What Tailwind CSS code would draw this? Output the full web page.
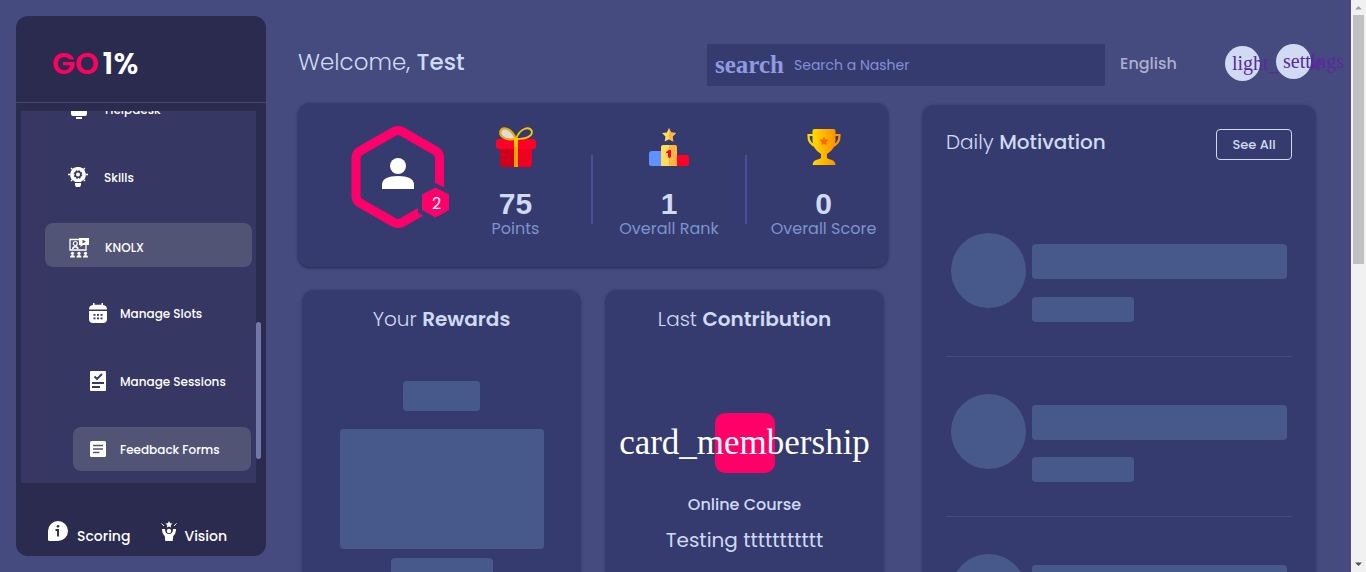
<!DOCTYPE html>
<html lang="en">
<head>
<meta charset="utf-8">
<title>GO 1%</title>
<script src="https://cdn.jsdelivr.net/npm/@tailwindcss/browser@4"></script>
</head>
<body class="flex h-screen overflow-hidden bg-[#454a7f] font-[Poppins,Inter,sans-serif] text-[#cfdaf3]">

<aside class="my-4 ml-4 flex w-[250px] shrink-0 flex-col rounded-xl bg-[#2a2b4e] text-white">
  <div class="flex h-[87px] shrink-0 items-center gap-1 border-b border-[#45466a] pl-9 pt-2 text-[30px] font-semibold">
    <span class="text-[#ff0061]">GO</span><span>1%</span>
  </div>
  <div class="mx-[5px] mt-2 flex min-h-0 flex-1">
    <nav class="flex min-h-0 flex-1 flex-col justify-end gap-6 overflow-hidden bg-[#363762] pb-3 text-xs font-medium [&_span]:pt-0.5">
      <a href="#" class="ml-6 mr-1 flex h-11 shrink-0 items-center gap-4 rounded-lg pl-6">
        <svg class="size-5 shrink-0" viewBox="0 0 20 20" fill="#fff"><path d="M2 1h16v14q0 2-2 2H4q-2 0-2-2zM7 18h6v2H7z"/></svg>
        <span>Helpdesk</span>
      </a>
      <a href="#" class="ml-6 mr-1 flex h-11 shrink-0 items-center gap-4 rounded-lg pl-[23px]">
        <svg class="size-5 shrink-0" viewBox="0 0 20 20" fill="none"><path d="M0 7.500h2M18 7.500h2M3 1l1.500 1.500M17 1l-1.500 1.500M3 14l1.500-1.500M17 14l-1.500-1.500" stroke="#fff" stroke-width="1.300"/><path d="M10 0a7.500 7.500 0 0 1 4 14l-1 1H7l-1-1A7.500 7.500 0 0 1 10 0M7 16h6v2l-1 2H8l-1-2z" fill="#fff"/><circle cx="10" cy="7.500" r="3.600" stroke="#363762" stroke-width="1.500" stroke-dasharray="1.800 1"/><circle cx="10" cy="7.500" r="2.700" stroke="#363762" stroke-width="1.400"/></svg>
        <span>Skills</span>
      </a>
      <a href="#" class="ml-6 mr-1 flex h-11 shrink-0 items-center gap-4 rounded-lg bg-[#525476] pl-6 pt-1">
        <svg class="mt-0.5 size-5 shrink-0" viewBox="0 0 20 20" fill="#fff"><path d="M10 1.500H1V12h16V7" fill="none" stroke="#fff" stroke-width="1.300"/><circle cx="6.300" cy="5.500" r="2" fill="none" stroke="#fff" stroke-width="1.200"/><path d="M3 11q0-3 3.300-3T9.600 11H8q0-1.500-1.700-1.500T4.600 11zM10 0h10v7h-6l-2.500 2V7H10zM1 19.500q0-2.500 2.500-2.500T6 19.500zM7.500 19.500Q7.500 17 10 17t2.500 2.500zM14 19.500q0-2.500 2.500-2.500t2.500 2.500z"/><circle cx="3.500" cy="15.300" r="1.600"/><circle cx="10" cy="15.300" r="1.600"/><circle cx="16.500" cy="15.300" r="1.600"/><path d="M13.500 1.700v3.800l3.500-1.900z" fill="#525476"/></svg>
        <span>KNOLX</span>
      </a>
      <a href="#" class="ml-[52px] mr-[5px] flex h-11 shrink-0 items-center gap-3 rounded-lg pl-[15px]">
        <svg class="size-5 shrink-0" viewBox="0 0 20 20" fill="#fff"><path d="M5 0h1.500v1.800h7V0H15v2q4 .3 4 4.500H1Q1 2.300 5 2zM1 8h18v8q0 4-4 4H5q-4 0-4-4z"/><path d="M5.500 11h2v1.800h-2zM9 11h2v1.800H9zM12.500 11h2v1.800h-2zM5.500 14.500h2v1.800h-2zM9 14.500h2v1.800H9zM12.500 14.500h2v1.800h-2z" fill="#363762"/></svg>
        <span>Manage Slots</span>
      </a>
      <a href="#" class="ml-[52px] mr-[5px] flex h-11 shrink-0 items-center gap-3 rounded-lg pl-[15px]">
        <svg class="size-5 shrink-0" viewBox="0 0 20 20" fill="none"><rect x="2" width="16" height="20" rx="1" fill="#fff"/><path d="M6.500 5.500 9 8l5-5M4 12h12M4 16h8" stroke="#363762" stroke-width="1.900"/></svg>
        <span>Manage Sessions</span>
      </a>
      <a href="#" class="ml-[52px] mr-[5px] flex h-11 shrink-0 items-center gap-3 rounded-lg bg-[#525476] pl-[15px]">
        <svg class="size-5 shrink-0" viewBox="0 0 20 20" fill="none"><rect x="2" y="2" width="16" height="16" rx="1.500" fill="#fff"/><path d="M5 6.500h10M5 10h10M5 13.500h6.500" stroke="#525476" stroke-width="1.400"/></svg>
        <span>Feedback Forms</span>
      </a>
    </nav>
    <div class="flex w-[5px] flex-col justify-end pb-6"><div class="h-[137px] rounded-full bg-[#7278a8]"></div></div>
  </div>
  <div class="flex h-[73px] shrink-0 items-center pl-8 pt-7 text-sm font-medium">
    <a href="#" class="flex gap-[9px]">
      <svg class="size-5" viewBox="0 0 20 20" fill="#fff"><path d="M10 0a10 10 0 0 1 0 20H1.500Q0 20 0 18.500V10A10 10 0 0 1 10 0"/><circle cx="10" cy="5.200" r="1.300" fill="#2a2b4e"/><path d="M7.500 9H10v6.500" fill="none" stroke="#2a2b4e" stroke-width="1.900"/></svg>
      <span class="pt-[5px]">Scoring</span>
    </a>
    <a href="#" class="ml-[29px] flex gap-[5px]">
      <svg class="size-5" viewBox="0 0 20 20" fill="#fff"><path d="m10 0 1.100 2.200 2.400.3-1.800 1.700.5 2.300L10 5.400 7.800 6.500l.5-2.300-1.800-1.700 2.400-.3z"/><circle cx="10" cy="10" r="2.200"/><path d="M2.500 2.500 5 5M17.500 2.500 15 5" stroke="#fff"/><path d="M3 8h3q0 5 4 5t4-5h3q0 5-2.800 7l-.5 5H6.300l-.5-5Q3 13 3 8"/></svg>
      <span class="pt-[5px]">Vision</span>
    </a>
  </div>
</aside>

<main class="ml-8 flex min-w-0 flex-1 flex-col">
  <header class="flex h-[103px] shrink-0 items-center pt-[43px]">
    <h1 class="h-[63px] min-w-0 flex-1 pt-1 text-[23px] leading-8 font-light">Welcome, <b class="font-medium">Test</b></h1>
    <div class="mb-[17px] flex h-[42px] w-[398px] items-center bg-[#363b6f] pl-2 text-[#8e9be0]">
      <label for="q" class="font-[Liberation_Serif,serif] text-[25px] leading-8 font-bold">search</label>
      <input id="q" type="text" placeholder="Search a Nasher" class="ml-[10px] min-w-0 flex-1 bg-transparent text-sm outline-none placeholder:text-[#8290d8]">
    </div>
    <button class="mb-[18px] ml-[15px] w-[105px] text-left text-base font-medium text-[#adb0cd]">English</button>
    <div class="mb-[22px] flex gap-4 pr-10 font-[Liberation_Serif,serif] text-xl text-[#582a9b]">
      <a href="#" class="mt-0.5 flex size-[35px] items-center rounded-full bg-[#d0daf2] pl-[7px]"><span>light_mode</span></a>
      <a href="#" class="relative flex size-[35px] items-center rounded-full bg-[#d0daf2] pl-[7px]"><span>settings</span></a>
    </div>
  </header>

  <div class="grid min-h-0 flex-1 grid-cols-[590fr_394fr] gap-[34px] pr-[35px]">
    <div class="flex min-w-0 flex-col gap-[23px]">
      <section class="grid h-[164px] shrink-0 grid-cols-[142fr_151fr_2px_152fr_2px_141fr] rounded-xl bg-[#363b6f] shadow-[0_1px_3px_#24274f]">
        <div class="min-w-0 pl-12 pt-[22px]">
          <svg class="h-[104px] w-[104px] max-w-none" viewBox="0 0 104 104" fill="none"><path d="M52 5.500Q54 5.500 56 6.500L90 26Q93 28 93.500 32V72Q93 76 90 78L56 97.500Q52 99.500 48 97.500L14 78Q10.500 76 10 72V32Q10.500 28 14 26L48 6.500Q50 5.500 52 5.500z" stroke="#ff006b" stroke-width="9"/><circle cx="52" cy="41" r="8" fill="#fff"/><path d="M36 64V59Q37 51 52 51T68 59V64z" fill="#fff"/><path d="M89.500 58 107 67V88L89.500 97 72 88V67z" fill="#363b6f"/><path d="M89.500 62.500 103 69.500V85L89.500 92.500 76 85V69.500z" fill="#ff006b"/><text x="86" y="84" font-size="16" fill="#fff">2</text></svg>
        </div>
        <div class="flex min-w-0 flex-col items-center pt-6">
          <svg class="size-10" viewBox="0 0 40 40" fill="none"><path d="M4 20h32v17q0 3-3 3H7q-3 0-3-3z" fill="#cf001b"/><path d="M20 20h16v17q0 3-3 3H20z" fill="#ee0022"/><path d="M0 15q0-3 3-3h34q3 0 3 3v5q0 2-2 2H2q-2 0-2-2z" fill="#ff0026"/><path d="M20 12C9 14 3 9 4.500 4 7-1 15 1 20 12" fill="#ddd" stroke="#e6ac09" stroke-width="2.200"/><path d="M20 12C24 1 33-1 35.800 4 37 9 31 12 20 12" stroke="#ffc400" stroke-width="1.800"/><path d="M18 11h2v29h-2z" fill="#e89b00"/><path d="M20 11h2v29h-2z" fill="#ffa800"/><path d="M18 11h4v9h-4z" fill="#ffc400"/></svg>
          <div class="mt-[19px] font-[Liberation_Sans,sans-serif] text-[30px] leading-9 font-bold">75</div>
          <div class="-mt-[3px] text-base leading-5 text-[#7b93d0]">Points</div>
        </div>
        <div class="mt-[52px] h-[69px] bg-[#4a4f9c]"></div>
        <div class="flex min-w-0 flex-col items-center pt-6">
          <svg class="size-10" viewBox="0 0 40 40"><path d="M0 27q0-3 3-3h10v15H2q-2 0-2-2z" fill="#6290ff"/><path d="M28 28h10q2 0 2 2v7q0 2-2 2H28z" fill="#ff0026"/><path d="M12 20q0-2 2-2h6v21h-8z" fill="#ffdc5b"/><path d="M20 18h6q2 0 2 2v19h-8z" fill="#ffb545"/><path d="M17 25 20 23h2v7l-1.500 1L19 30v-4h-2z" fill="#ff0026"/><path d="m20 1 2.100 4.400 4.900.7-3.500 3.500.8 4.900L20 12.200l-4.300 2.300.8-4.900L13 6.100l4.900-.7z" fill="#ffdc5b"/><path d="m20 1 2.100 4.400 4.900.7-3.500 3.500.8 4.900L20 12.200z" fill="#ffb545"/></svg>
          <div class="mt-[19px] font-[Liberation_Sans,sans-serif] text-[30px] leading-9 font-bold">1</div>
          <div class="-mt-[3px] text-base leading-5 whitespace-nowrap text-[#7b93d0]">Overall Rank</div>
        </div>
        <div class="mt-[52px] h-[69px] bg-[#4a4f9c]"></div>
        <div class="flex min-w-0 flex-col items-center pl-3 pt-6">
          <svg class="size-10" viewBox="0 0 40 40"><defs><linearGradient id="gold"><stop stop-color="#ffda00"/><stop offset="1" stop-color="#ff9100"/></linearGradient></defs><path d="M9 8H4.500Q4 17 13 20M31 8h4.500Q36 17 27 20" fill="none" stroke="url(#gold)" stroke-width="2.200"/><path d="M8.500 4q0-2 2-2h19q2 0 2 2v9q0 9-8.500 14v4q1 1 5 2 3 1 3.500 5h-23q.5-4 3.500-5 4-1 5-2v-4q-8.500-5-8.500-14z" fill="url(#gold)"/><path d="m20 9.500 1.400 2.900 3.100.4-2.200 2.200.5 3.200-2.800-1.500-2.800 1.500.5-3.200-2.200-2.200 3.100-.4z" fill="#ff6700"/></svg>
          <div class="mt-[19px] font-[Liberation_Sans,sans-serif] text-[30px] leading-9 font-bold">0</div>
          <div class="-mt-[3px] text-base leading-5 whitespace-nowrap text-[#7b93d0]">Overall Score</div>
        </div>
      </section>

      <div class="grid min-h-0 flex-1 grid-cols-2 gap-6 px-1">
        <section class="flex flex-col items-center rounded-t-xl bg-[#363b6f] pt-[14px] shadow-[0_0_3px_#363b6f]">
          <h2 class="text-xl leading-[30px] font-light">Your <b class="font-semibold">Rewards</b></h2>
          <div class="mt-[47px] h-[30px] w-[77px] shrink-0 rounded bg-[#47598b]"></div>
          <div class="mt-[18px] h-[120px] w-[204px] shrink-0 rounded bg-[#47598b]"></div>
          <div class="mt-[9px] h-[30px] w-[102px] shrink-0 rounded bg-[#47598b]"></div>
        </section>
        <section class="flex flex-col items-center rounded-t-xl bg-[#363b6f] pt-[14px] shadow-[0_0_3px_#363b6f]">
          <h2 class="text-xl leading-[30px] font-light">Last <b class="font-semibold">Contribution</b></h2>
          <div class="mt-[79px] flex size-[60px] shrink-0 items-center justify-center rounded-[10px] bg-[#ff0068] font-[Liberation_Serif,serif] text-[35px] text-white">card_membership</div>
          <h3 class="mt-5 text-base leading-6 font-medium">Online Course</h3>
          <p class="mt-2 text-xl leading-[30px]">Testing ttttttttttt</p>
        </section>
      </div>
    </div>

    <section class="mt-[2px] flex min-w-0 flex-col overflow-hidden rounded-t-xl bg-[#363b6f] px-6 pt-6 shadow-[0_0_3px_#363b6f]">
      <div class="flex items-start justify-between">
        <h2 class="-mt-[2px] text-xl leading-[30px] font-light">Daily <b class="font-medium">Motivation</b></h2>
        <button class="h-[31px] w-[76px] rounded border border-[#cfdaf3] text-[13px] font-medium">See All</button>
      </div>
      <ul class="mt-9">
        <li class="flex h-[161px] gap-[6px] border-b border-[#474b7c] px-[5px] pt-[37px]">
          <div class="size-[75px] shrink-0 rounded-full bg-[#47598b]"></div>
          <div class="flex-1 pt-[11px]"><div class="h-[35px] rounded bg-[#47598b]"></div><div class="mt-[18px] h-[25px] w-2/5 rounded bg-[#47598b]"></div></div>
        </li>
        <li class="flex h-[160px] gap-[6px] border-b border-[#474b7c] px-[5px] pt-[37px]">
          <div class="size-[75px] shrink-0 rounded-full bg-[#47598b]"></div>
          <div class="flex-1 pt-[11px]"><div class="h-[35px] rounded bg-[#47598b]"></div><div class="mt-[17px] h-[25px] w-2/5 rounded bg-[#47598b]"></div></div>
        </li>
        <li class="flex h-[160px] gap-[6px] px-[5px] pt-[37px]">
          <div class="size-[75px] shrink-0 rounded-full bg-[#47598b]"></div>
          <div class="flex-1 pt-[11px]"><div class="h-[35px] rounded bg-[#47598b]"></div></div>
        </li>
      </ul>
    </section>
  </div>
</main>

<div class="flex w-[15px] shrink-0 flex-col items-center bg-[#f1f1f1]">
  <svg class="h-[15px] w-[15px] shrink-0" viewBox="0 0 15 15"><path d="M4 9.500 7.500 6 11 9.500z" fill="#a3a3a3"/></svg>
  <div class="h-[249px] w-[11px] bg-[#c1c1c1]"></div>
  <svg class="mt-auto h-[15px] w-[15px] shrink-0" viewBox="0 0 15 15"><path d="M4 5.500 7.500 9 11 5.500z" fill="#505050"/></svg>
</div>
</body>
</html>
